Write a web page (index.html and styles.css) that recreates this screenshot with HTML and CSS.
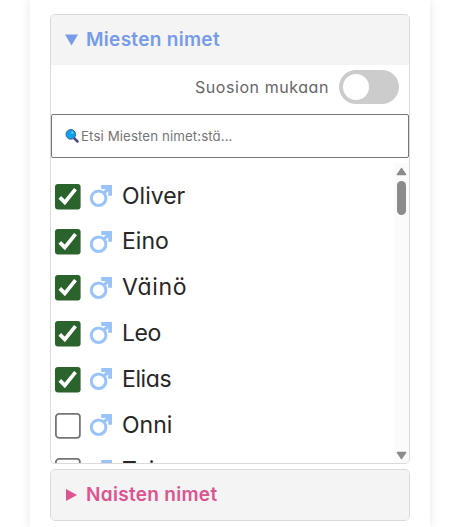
FILE: index.html
```html
<!DOCTYPE html>
<html lang="fi">
<head>
<meta charset="utf-8">
<title>Nimet</title>
<link rel="stylesheet" href="styles.css">
</head>
<body>
<svg class="defs" width="0" height="0" aria-hidden="true">
  <symbol id="male" viewBox="0 0 24 24">
    <circle cx="9.6" cy="14.2" r="7.3" fill="none" stroke="#99c3fb" stroke-width="3"/>
    <path d="M14 7.6 17 4.9H12.2V1H23v10.8h-3.8V7.2L16.4 10z" fill="#99c3fb"/>
  </symbol>
  <symbol id="checked" viewBox="0 0 26 26">
    <rect width="25.6" height="25.6" rx="3" fill="#2a632c"/>
    <path d="M4.8 13.4 9.8 18.4 20.5 5.2" fill="none" stroke="#fff" stroke-width="3.7"/>
  </symbol>
  <symbol id="unchecked" viewBox="0 0 26 26">
    <rect x=".9" y=".9" width="24" height="24" rx="3.2" fill="#fff" stroke="#767676" stroke-width="1.8"/>
  </symbol>
</svg>
<main class="page">
  <section class="card open">
    <h2 class="summary boys"><svg class="marker" viewBox="0 0 13 12"><path d="M0 .5h13L6.5 11.5z"/></svg><span>Miesten nimet</span></h2>
    <div class="sort"><span class="sort-label">Suosion mukaan</span><span class="switch"></span></div>
    <div class="search">
      <svg class="lens" viewBox="0 0 14 14"><path d="m8.5 8.5 4 4" stroke="#4f4d83" stroke-width="2.5" stroke-linecap="round"/><circle cx="5.8" cy="5.4" r="4.8" fill="#0ba3ef" stroke="#3c6498" stroke-width="1"/><circle cx="7.3" cy="3.6" r="1.1" fill="#78d7ff"/></svg>
      <span class="placeholder">Etsi Miesten nimet:stä...</span>
    </div>
    <div class="list">
      <div class="rows">
        <div class="row"><svg class="box"><use href="#checked"/></svg><svg class="male"><use href="#male"/></svg><span class="name">Oliver</span></div>
        <div class="row"><svg class="box"><use href="#checked"/></svg><svg class="male"><use href="#male"/></svg><span class="name">Eino</span></div>
        <div class="row"><svg class="box"><use href="#checked"/></svg><svg class="male"><use href="#male"/></svg><span class="name wide">Väinö</span></div>
        <div class="row"><svg class="box"><use href="#checked"/></svg><svg class="male"><use href="#male"/></svg><span class="name tight">Leo</span></div>
        <div class="row"><svg class="box"><use href="#checked"/></svg><svg class="male"><use href="#male"/></svg><span class="name tight">Elias</span></div>
        <div class="row"><svg class="box"><use href="#unchecked"/></svg><svg class="male"><use href="#male"/></svg><span class="name">Onni</span></div>
        <div class="row"><svg class="box"><use href="#unchecked"/></svg><svg class="male"><use href="#male"/></svg><span class="name">Toivo</span></div>
      </div>
      <div class="scrollbar">
        <svg class="arrow" viewBox="0 0 9 7"><path d="M4.5 1 8 6H1z"/></svg>
        <span class="thumb"></span>
        <svg class="arrow down" viewBox="0 0 9 7"><path d="M1 1h7L4.5 6z"/></svg>
      </div>
    </div>
  </section>
  <section class="card">
    <h2 class="summary girls"><svg class="marker" viewBox="0 0 13 12"><path d="M1 0v12l11-6z"/></svg><span>Naisten nimet</span></h2>
  </section>
</main>
</body>
</html>
```

FILE: styles.css
```css
* { box-sizing: border-box; }
html, body { height: 100%; }
body {
  margin: 0;
  overflow: hidden;
  background: #fff;
  font-family: Inter, "Open Sans", sans-serif;
  font-feature-settings: "cv11";
  color: #272727;
}
.defs { display: block; }
svg { flex: none; }
.page {
  width: 400px;
  height: 527px;
  margin: 0 auto;
  padding: 14px 20px 0;
  box-shadow: 0 0 10px rgba(0, 0, 0, .1);
}
.card {
  height: 52px;
  margin-bottom: 5px;
  border: 1px solid #dadada;
  border-radius: 5px;
  overflow: hidden;
}
.card.open { height: 450px; }
.summary {
  display: flex;
  align-items: center;
  height: 50px;
  margin: 0;
  padding-left: 14px;
  background: #f4f4f4;
  font-size: 19px;
  font-weight: 600;
  letter-spacing: .3px;
  white-space: nowrap;
}
.summary span { margin-top: -1px; }
.marker { width: 13px; height: 12px; margin-right: 8px; fill: currentColor; }
.boys { color: #769be8; }
.girls { color: #dc5591; }
.sort {
  display: flex;
  justify-content: flex-end;
  align-items: center;
  height: 49px;
  padding: 0 10px 5px 0;
}
.sort-label { margin: -1px 10px 0 0; color: #666; font-size: 16px; letter-spacing: .56px; }
.switch {
  width: 60px;
  height: 34px;
  padding: 4px;
  border-radius: 17px;
  background: #ccc;
}
.switch::before {
  content: "";
  display: block;
  width: 26px;
  height: 26px;
  border-radius: 50%;
  background: #fff;
}
.search {
  display: flex;
  align-items: center;
  height: 44px;
  padding-left: 13px;
  border: 1px solid #767676;
  border-radius: 2px;
}
.lens { width: 14px; height: 14px; margin: -1px 2px 0 0; fill: none; }
.placeholder { margin-top: -1px; color: #757575; font-size: 13.3px; letter-spacing: .09px; }
.list { display: flex; height: 300px; margin-top: 5px; }
.rows { flex: 1; padding: 10.7px 0 0 4px; overflow: hidden; }
.row { display: flex; align-items: center; height: 45.8px; }
.box { width: 26px; height: 26px; }
.male { width: 24px; height: 24px; margin: -1px 8px 0 8px; }
.name { margin: -2px 0 0 1px; font-size: 23px; line-height: 30px; }
.wide { letter-spacing: .7px; }
.tight { letter-spacing: -.4px; }
.scrollbar {
  display: flex;
  flex-direction: column;
  align-items: center;
  width: 15px;
  padding: 4px 0 3px;
  background: #fbfbfb;
}
.arrow { width: 11px; height: 9px; fill: #8b8b8b; stroke: #8b8b8b; stroke-linejoin: round; }
.thumb { width: 9px; height: 34px; margin-top: 5px; border-radius: 5px; background: #8b8b8b; }
.down { margin-top: auto; }
```
